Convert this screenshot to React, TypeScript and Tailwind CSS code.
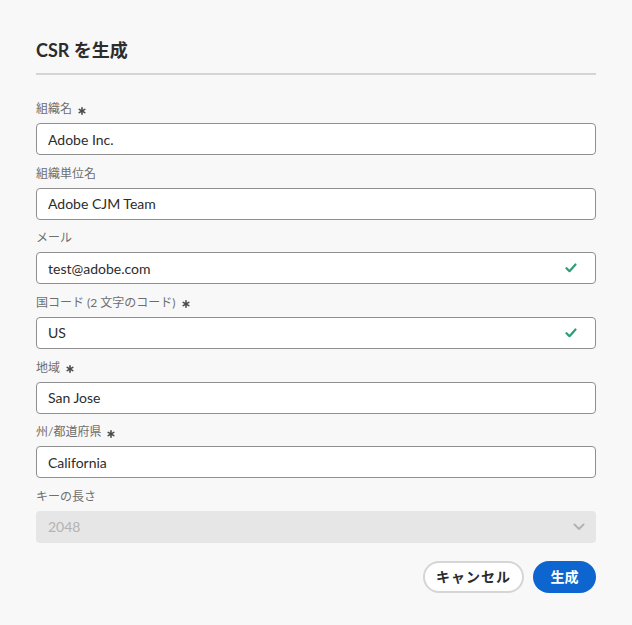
const font = {
  fontFamily: '"Lato", "Noto Sans CJK JP", sans-serif',
};

type Field = {
  label: string;
  value: string;
  required?: boolean;
  valid?: boolean;
};

const fields: Field[] = [
  { label: '組織名', value: 'Adobe Inc.', required: true },
  { label: '組織単位名', value: 'Adobe CJM Team' },
  { label: 'メール', value: 'test@adobe.com', valid: true },
  { label: '国コード (2 文字のコード)', value: 'US', required: true, valid: true },
  { label: '地域', value: 'San Jose', required: true },
  { label: '州/都道府県', value: 'California', required: true },
];

function Check() {
  return (
    <svg width="12" height="10" viewBox="0 0 12 10" fill="none">
      <path d="M1.5 5.2 L4.5 8.2 L10.5 1.5" stroke="#2d9d78" strokeWidth="2.2" strokeLinecap="round" strokeLinejoin="round" />
    </svg>
  );
}

function Chevron() {
  return (
    <svg width="12" height="8" viewBox="0 0 12 8" fill="none">
      <path d="M1.5 1.5 L6 6 L10.5 1.5" stroke="#b3b3b3" strokeWidth="2" strokeLinecap="round" strokeLinejoin="round" />
    </svg>
  );
}

// spectrum-style required asterisk
function Asterisk() {
  return (
    <svg width="8" height="8" viewBox="0 0 8 8" className="mt-[3px]">
      <g stroke="#4b4b4b" strokeWidth="1.6" strokeLinecap="round">
        <line x1="4" y1="0.8" x2="4" y2="7.2" />
        <line x1="1.2" y1="2.4" x2="6.8" y2="5.6" />
        <line x1="1.2" y1="5.6" x2="6.8" y2="2.4" />
      </g>
    </svg>
  );
}

function Label({ text, required }: { text: string; required?: boolean }) {
  return (
    <div className="flex items-center gap-[6px] text-[12px] leading-4 text-[#6e6e6e] mb-[6px]">
      <span>{text}</span>
      {required && <Asterisk />}
    </div>
  );
}

export default function App() {
  return (
    <div className="min-h-[625px] bg-[#f8f8f8] px-9 pt-[36px]" style={font}>
      <h2 className="text-[18px] leading-[28px] font-bold text-[#2c2c2c]">CSR を生成</h2>
      <div className="mt-[9px] h-[2px] bg-[#d5d5d5]" />

      <div className="mt-[26px] flex flex-col gap-[10.67px]">
        {fields.map((f) => (
          <div key={f.label}>
            <Label text={f.label} required={f.required} />
            <div className="flex items-center justify-between h-8 rounded border border-[#8f8f8f] bg-white pl-[11px] pr-[18px] text-[14px] text-[#2c2c2c]">
              <span>{f.value}</span>
              {f.valid && <Check />}
            </div>
          </div>
        ))}
        <div>
          <Label text="キーの長さ" />
          <div className="flex items-center justify-between h-8 rounded bg-[#e6e6e6] pl-[12px] pr-[11px] text-[14px] text-[#b3b3b3]">
            <span>2048</span>
            <Chevron />
          </div>
        </div>
      </div>

      <div className="mt-[18px] flex justify-end gap-[9px]">
        <button className="h-8 w-[101px] rounded-full border-2 border-[#d5d5d5] bg-white text-[14px] font-bold tracking-[1px] text-[#2c2c2c]">
          キャンセル
        </button>
        <button className="h-8 w-[63px] rounded-full bg-[#0d66d0] text-[14px] font-bold text-white">
          生成
        </button>
      </div>
    </div>
  );
}
